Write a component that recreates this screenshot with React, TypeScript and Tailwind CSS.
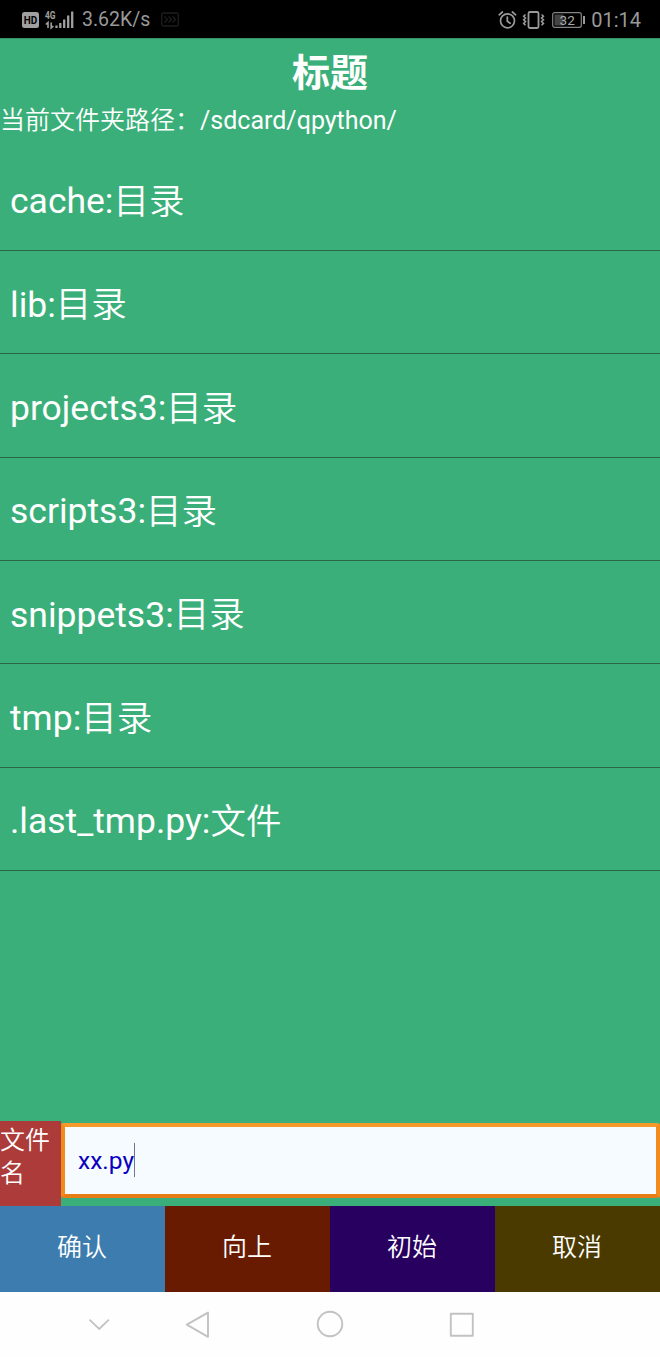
// App.tsx
import React, { useState } from 'react';

interface FileEntry {
  name: string;
  kind: '目录' | '文件';
}

const entries: FileEntry[] = [
  { name: 'cache', kind: '目录' },
  { name: 'lib', kind: '目录' },
  { name: 'projects3', kind: '目录' },
  { name: 'scripts3', kind: '目录' },
  { name: 'snippets3', kind: '目录' },
  { name: 'tmp', kind: '目录' },
  { name: '.last_tmp.py', kind: '文件' },
];

const actions = [
  { label: '确认', color: 'bg-[#3c7cae]' },
  { label: '向上', color: 'bg-[#681b00]' },
  { label: '初始', color: 'bg-[#280060]' },
  { label: '取消', color: 'bg-[#4b3a00]' },
];

const NetworkIcons: React.FC = () => (
  <svg width="54" height="20" viewBox="0 0 54 20" className="shrink-0">
    {/* HD badge */}
    <rect x="0" y="2" width="17" height="16" rx="2.5" fill="#a0a0a0" />
    <text x="8.5" y="13.8" textAnchor="middle" fontSize="10.5" fontWeight="700" fill="#000" textLength="13.5" lengthAdjust="spacingAndGlyphs">HD</text>
    {/* 4G + data arrows */}
    <text x="23" y="8.6" fontSize="10" fontWeight="700" fill="#a0a0a0" textLength="10.5" lengthAdjust="spacingAndGlyphs">4G</text>
    <path d="M26 18v-5.5l-2.2 2M29.2 12.5V18l2.2-2" fill="none" stroke="#a0a0a0" strokeWidth="1.6" />
    {/* Signal bars */}
    <path d="M34.5 18v-2.5M38.3 18v-5M42.2 18V9.5M46.2 18V5.5M50.2 18V1.5" stroke="#a0a0a0" strokeWidth="2.3" />
  </svg>
);

const AlarmIcon: React.FC = () => (
  <svg width="20" height="20" viewBox="0 0 20 20" fill="none" stroke="#999" strokeWidth="1.7" strokeLinecap="round">
    <circle cx="10.5" cy="10.8" r="7" />
    <path d="M10.3 7v4.2l2.8 2M2.2 4.8 5.4 2M15.4 2l3.2 2.8" />
  </svg>
);

const VibrateIcon: React.FC = () => (
  <svg width="24" height="20" viewBox="0 0 24 20" fill="none" stroke="#999" strokeWidth="1.8">
    <rect x="7.5" y="2" width="10" height="16" rx="1.5" />
    <path d="M4.5 4.5 2.7 6.2 4.5 8 2.7 9.8l1.8 1.8-1.8 1.8 1.8 1.8M20.6 4.5l1.8 1.7L20.6 8l1.8 1.8-1.8 1.8 1.8 1.8-1.8 1.8" strokeWidth="1.6" />
  </svg>
);

const BatteryIcon: React.FC = () => (
  <svg width="34" height="18" viewBox="0 0 34 18">
    <rect x="0.7" y="1.7" width="28.6" height="14.6" rx="2" fill="none" stroke="#858585" strokeWidth="1.2" />
    <rect x="2.5" y="3.5" width="9" height="11" fill="#444" />
    <text x="15.2" y="13.6" textAnchor="middle" fontSize="13.5" fill="#aaa">32</text>
    <path d="M32 5v8" stroke="#999" strokeWidth="2" />
  </svg>
);

const StatusBar: React.FC = () => (
  <header className="flex h-[38px] items-center justify-between bg-black pr-[19px] pl-[22px] text-[20px] leading-none text-[#999]">
    <div className="flex items-center pt-px">
      <NetworkIcons />
      <span className="ml-[6px] w-[71px] text-[19.5px]">3.62K/s</span>
      <svg width="18" height="16" viewBox="0 0 18 16" fill="none" stroke="#1e1e1e" strokeWidth="1.3" className="ml-[8px]">
        <rect x="0.7" y="1" width="16.6" height="13" rx="1.5" />
        <path d="m3.5 4.5 3 3-3 3M7.5 4.5l3 3-3 3M11.5 4.5l3 3-3 3" />
      </svg>
    </div>
    <div className="flex items-center pt-px">
      <AlarmIcon />
      <span className="ml-[4px]"><VibrateIcon /></span>
      <span className="ml-[7px]"><BatteryIcon /></span>
      <span className="ml-[5px]">01:14</span>
    </div>
  </header>
);

const NavBar: React.FC = () => (
  <nav className="flex h-[65px] items-center bg-[#fefefe] pb-[2px] pl-[86px]">
    <svg width="26" height="30" viewBox="0 0 26 30" fill="none" stroke="#c2c2c2" strokeWidth="1.8">
      <path d="m3.5 10.7 9.7 9.3 9.7-9.3" />
    </svg>
    <svg width="30" height="30" viewBox="0 0 30 30" fill="none" stroke="#c2c2c2" strokeWidth="1.9" strokeLinejoin="round" className="ml-[71px]">
      <path d="M3.8 15.7 25 3.6v24.2z" />
    </svg>
    <svg width="30" height="30" viewBox="0 0 30 30" fill="none" stroke="#c2c2c2" strokeWidth="1.9" className="ml-[102px]">
      <circle cx="15" cy="15" r="12.3" />
    </svg>
    <svg width="30" height="30" viewBox="0 0 30 30" fill="none" stroke="#c2c2c2" strokeWidth="1.9" strokeLinejoin="round" className="ml-[102px]">
      <rect x="3.8" y="4.8" width="22" height="22" />
    </svg>
  </nav>
);

const App: React.FC = () => {
  const [fileName, setFileName] = useState('xx.py');

  return (
    <div className="flex h-[1357px] w-[660px] flex-col overflow-hidden bg-[#3aaf79] font-['Roboto','Noto_Sans_CJK_SC',sans-serif] text-white">
      <StatusBar />
      <h1 className="h-[64.5px] border-t border-[#37946a] pt-[6px] text-center text-[38px] leading-[56px] font-bold">标题</h1>
      <p className="h-[45px] text-[25px] leading-[36px] whitespace-nowrap">
        <span className="font-[350]">当前文件夹路径：</span>/sdcard/qpython/
      </p>

      {/* Folder contents */}
      <ul className="flex-1">
        {entries.map((entry) => (
          <li key={entry.name} className="flex h-[103.35px] items-center border-b border-[#286848] pt-[7px] pl-[10px] text-[35.5px] leading-none">
            {entry.name}:<span className="pt-px font-[350]">{entry.kind}</span>
          </li>
        ))}
      </ul>

      {/* File name row */}
      <div className="flex h-[85px]">
        <label htmlFor="fileName" className="w-[61px] bg-[#ac3b3a] pt-[3px] text-[25px] leading-[33px] font-[350]">文件名</label>
        <div className="mt-[2px] flex h-[75px] flex-1 items-center rounded-[3px] border-4 border-t-[#f59a2a] border-r-[#f28a1c] border-b-[#e87d17] border-l-[#f28a1c] bg-[#f6fbff] pl-[13px]">
          <input
            id="fileName"
            value={fileName}
            size={5}
            onChange={(e) => setFileName(e.target.value)}
            className="w-[56px] bg-transparent pt-[2px] text-[24.5px] text-[#0b00c0] outline-none"
          />
          <span className="-mt-[2px] h-[34px] w-px bg-[#6f7690]" />
        </div>
      </div>

      <div className="grid h-[86px] grid-cols-4">
        {actions.map((action) => (
          <button key={action.label} className={`${action.color} pr-px pb-[2px] text-[25px] font-[350]`}>
            {action.label}
          </button>
        ))}
      </div>
      <NavBar />
    </div>
  );
};

export default App;
